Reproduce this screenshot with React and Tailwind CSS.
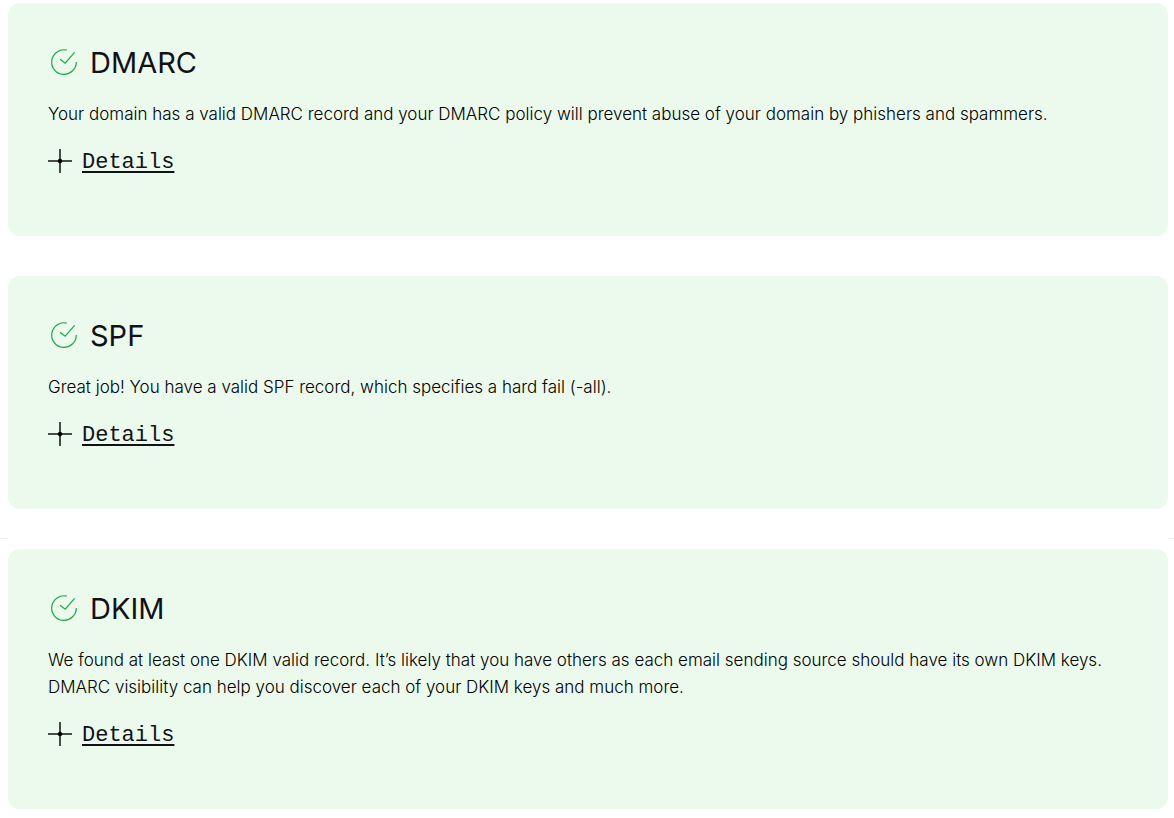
import React from 'react';

const checks = [
    {
        id: 'dmarc',
        title: 'DMARC',
        text: 'Your domain has a valid DMARC record and your DMARC policy will prevent abuse of your domain by phishers and spammers.',
    },
    {
        id: 'spf',
        title: 'SPF',
        text: 'Great job! You have a valid SPF record, which specifies a hard fail (-all).',
    },
    {
        id: 'dkim',
        title: 'DKIM',
        text: 'We found at least one DKIM valid record. It’s likely that you have others as each email sending source should have its own DKIM keys. DMARC visibility can help you discover each of your DKIM keys and much more.',
    },
];

function CheckIcon() {
    return (
        <svg className="w-8 h-8 shrink-0" viewBox="0 0 32 32" fill="none" stroke="#1fa64a" strokeWidth="1.2" aria-hidden="true">
            <path d="M18.8 3.1A12.3 12.3 0 1 0 28.3 15" />
            <path d="M12 12.2L17.2 16.2L26.6 5.4" />
        </svg>
    );
}

function PlusIcon() {
    return (
        <svg className="w-6 h-6 shrink-0" viewBox="0 0 24 24" aria-hidden="true">
            <path d="M12 0V24M0 12H24" stroke="#111" strokeOpacity="0.75" strokeWidth="2" />
            <circle cx="12" cy="12" r="2.2" fill="#000" />
        </svg>
    );
}

function CheckCard({ title, text }) {
    return (
        <section className="ml-2 mr-1.5 rounded-xl bg-[#ebfaed] px-10 pt-10 pb-[58px]">
            <div className="flex items-center gap-2.5">
                <CheckIcon />
                <h2 className="text-[29px] leading-10">{title}</h2>
            </div>
            <p className="mt-[18px] text-[17px] leading-[27px] font-light text-black">{text}</p>
            <button type="button" className="mt-4 flex h-[34px] items-center gap-2.5 cursor-pointer">
                <PlusIcon />
                <span className="pt-0.5 font-['Liberation_Mono',monospace] text-[22px] underline decoration-2 underline-offset-3">
                    Details
                </span>
            </button>
        </section>
    );
}

export default function App() {
    const [dmarc, spf, dkim] = checks;

    return (
        <main className="bg-white pt-[3px] pb-2 font-['Inter',sans-serif] text-[#111118]">
            <div className="flex flex-col gap-10">
                <CheckCard title={dmarc.title} text={dmarc.text} />
                <CheckCard title={spf.title} text={spf.text} />
            </div>
            <div className="flex h-10 justify-between pt-[29px]">
                <span className="h-px w-2 bg-[#f0f0f0]" />
                <span className="h-px w-1.5 bg-[#f0f0f0]" />
            </div>
            <CheckCard title={dkim.title} text={dkim.text} />
        </main>
    );
}
